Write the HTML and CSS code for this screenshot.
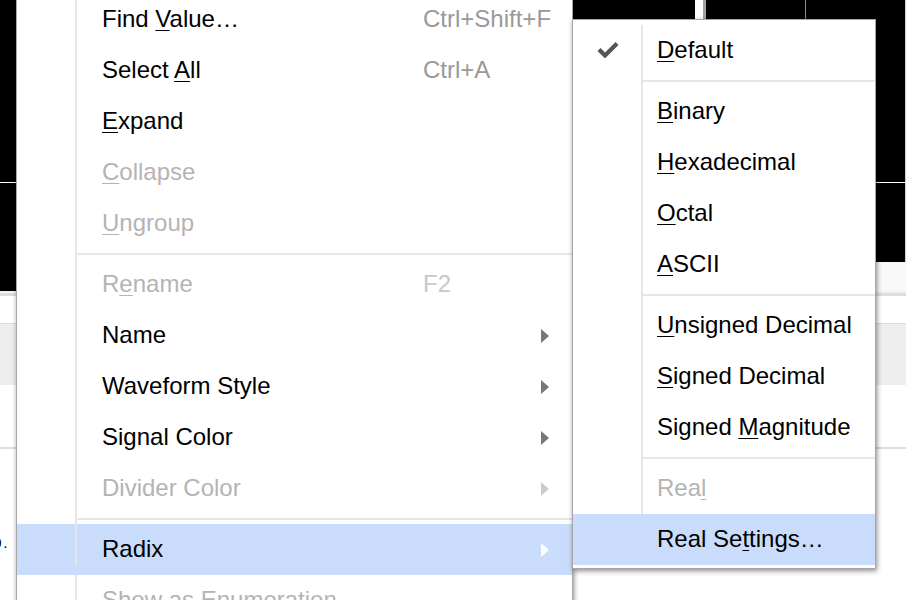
FILE: index.html
```html
<!DOCTYPE html>
<html>
<head>
<meta charset="utf-8">
<link rel="stylesheet" href="styles.css">
</head>
<body>
<div class="app">
  <div class="top">
    <div class="names-top"></div>
    <div class="waves-top">
      <div class="wave-canvas"></div>
      <div class="wave-strip"></div>
    </div>
  </div>
  <div class="band-edge"></div>
  <div class="band-white1"></div>
  <div class="rule"></div>
  <div class="band-gray"></div>
  <div class="band-white2"></div>
  <div class="rule2"></div>
  <div class="band-last"><span class="cell-text">0.</span></div>

  <div class="menu main">
    <div class="item"><div class="ic"></div><div class="lb">Find <u>V</u>alue…</div><div class="sc">Ctrl+Shift+F</div><div class="ar"></div></div>
    <div class="item"><div class="ic"></div><div class="lb">Select <u>A</u>ll</div><div class="sc">Ctrl+A</div><div class="ar"></div></div>
    <div class="item"><div class="ic"></div><div class="lb"><u>E</u>xpand</div><div class="sc"></div><div class="ar"></div></div>
    <div class="item dis"><div class="ic"></div><div class="lb"><u>C</u>ollapse</div><div class="sc"></div><div class="ar"></div></div>
    <div class="item dis"><div class="ic"></div><div class="lb"><u>U</u>ngroup</div><div class="sc"></div><div class="ar"></div></div>
    <div class="sep"><div class="ic"></div><div class="line"></div></div>
    <div class="item dis"><div class="ic"></div><div class="lb">R<u>e</u>name</div><div class="sc">F2</div><div class="ar"></div></div>
    <div class="item"><div class="ic"></div><div class="lb">Name</div><div class="sc"></div><div class="ar"><svg width="8" height="14" viewBox="0 0 8 14"><path d="M0 0L8 7L0 14Z"/></svg></div></div>
    <div class="item"><div class="ic"></div><div class="lb">Waveform Style</div><div class="sc"></div><div class="ar"><svg width="8" height="14" viewBox="0 0 8 14"><path d="M0 0L8 7L0 14Z"/></svg></div></div>
    <div class="item"><div class="ic"></div><div class="lb">Signal Color</div><div class="sc"></div><div class="ar"><svg width="8" height="14" viewBox="0 0 8 14"><path d="M0 0L8 7L0 14Z"/></svg></div></div>
    <div class="item dis"><div class="ic"></div><div class="lb">Divider Color</div><div class="sc"></div><div class="ar"><svg width="8" height="14" viewBox="0 0 8 14"><path d="M0 0L8 7L0 14Z"/></svg></div></div>
    <div class="sep"><div class="ic"></div><div class="line"></div></div>
    <div class="item hl"><div class="ic"></div><div class="lb">Radix</div><div class="sc"></div><div class="ar"><svg width="8" height="14" viewBox="0 0 8 14"><path d="M0 0L8 7L0 14Z"/></svg></div></div>
    <div class="item dis"><div class="ic"></div><div class="lb">Show as Enumeration</div><div class="sc"></div><div class="ar"></div></div>
  </div>

  <div class="menu sub">
    <div class="item"><div class="ic"><svg class="check" width="22" height="17" viewBox="0 0 22 17"><path d="M2 8.5L8 14.5L20 2.5" fill="none" stroke="#555" stroke-width="4.2"/></svg></div><div class="lb"><u>D</u>efault</div></div>
    <div class="sep"><div class="ic"></div><div class="line"></div></div>
    <div class="item"><div class="ic"></div><div class="lb"><u>B</u>inary</div></div>
    <div class="item"><div class="ic"></div><div class="lb"><u>H</u>exadecimal</div></div>
    <div class="item"><div class="ic"></div><div class="lb"><u>O</u>ctal</div></div>
    <div class="item"><div class="ic"></div><div class="lb"><u>A</u>SCII</div></div>
    <div class="sep"><div class="ic"></div><div class="line"></div></div>
    <div class="item"><div class="ic"></div><div class="lb"><u>U</u>nsigned Decimal</div></div>
    <div class="item"><div class="ic"></div><div class="lb"><u>S</u>igned Decimal</div></div>
    <div class="item"><div class="ic"></div><div class="lb">Signed <u>M</u>agnitude</div></div>
    <div class="sep"><div class="ic"></div><div class="line"></div></div>
    <div class="item dis"><div class="ic"></div><div class="lb">Rea<u>l</u></div></div>
    <div class="item hl"><div class="ic"></div><div class="lb">Real Se<u>t</u>tings…</div></div>
  </div>
</div>
</body>
</html>
```

FILE: styles.css
```css
html, body {
  margin: 0;
  padding: 0;
  background: #fff;
}
body {
  width: 906px;
  height: 600px;
  overflow: hidden;
  font-family: "Liberation Sans", Arial, sans-serif;
}
.app {
  position: relative;
  width: 906px;
  height: 600px;
  overflow: hidden;
}

/* background application */
.top {
  display: flex;
  height: 291px;
}
.names-top {
  width: 300px;
  background:
    linear-gradient(#fff, #fff) 0 182px / 100% 1px no-repeat,
    #000;
}
.waves-top {
  flex: 1;
  display: flex;
  flex-direction: column;
}
.wave-canvas {
  height: 262px;
  background:
    linear-gradient(#fff, #fff) 0 182px / 100% 1px no-repeat,
    linear-gradient(#fff, #fff) 395px 0 / 8px 100% no-repeat,
    linear-gradient(#a0a0a0, #a0a0a0) 403px 0 / 3px 100% no-repeat,
    linear-gradient(#8a8a8a, #8a8a8a) 505px 0 / 1px 100% no-repeat,
    linear-gradient(#cfcfcf, #cfcfcf) 605px 0 / 1px 100% no-repeat,
    #000;
}
.wave-strip {
  flex: 1;
  background: #f9f9f9;
}
.band-edge {
  height: 2px;
  background: #f2f2f2;
  border-bottom: 3px solid #dedede;
}
.band-white1 { height: 27px; }
.rule { height: 1px; background: #dadada; }
.band-gray { height: 61px; background: #eeeeee; }
.band-white2 { height: 62px; }
.rule2 { height: 2px; background: #dedede; }
.band-last {
  padding-top: 85px;
}
.cell-text {
  display: inline-block;
  margin-left: -6px;
  font-family: "Liberation Serif", "Times New Roman", serif;
  font-size: 15px;
  line-height: 16px;
  letter-spacing: 2px;
  color: #000;
}

/* menus */
.menu {
  position: absolute;
  box-sizing: border-box;
  background: #fff;
  border: 1px solid #a6a6a6;
  box-shadow: 1px 2px 5px rgba(0, 0, 0, 0.45);
  font-size: 24px;
  color: #000;
}
.main {
  left: 16px;
  top: -11px;
  width: 557px;
  padding: 4px 0;
}
.sub {
  left: 572px;
  top: 19px;
  width: 304px;
  padding: 5px 0 3px;
}
.item {
  display: grid;
  grid-template-rows: 51px;
  height: 51px;
  align-items: start;
  line-height: 49px;
  white-space: nowrap;
}
.main .item {
  grid-template-columns: 60px 346px 1fr 8px;
  padding-right: 23px;
}
.sub .item {
  grid-template-columns: 70px 1fr;
}
.ic {
  box-sizing: border-box;
  height: 51px;
  border-right: 2px solid #e6e6e6;
  display: flex;
  align-items: center;
  justify-content: center;
}
.main .lb { padding-left: 25px; }
.sub .lb { padding-left: 14px; }
.sc { color: #999; }
.ar {
  display: flex;
  align-items: center;
  height: 51px;
}
.ar svg { fill: #777; display: block; }
.dis { color: #b4b4b4; }
.dis .sc { color: #c8c8c8; }
.dis .ar svg { fill: #cccccc; }
.hl { background: #cadcfb; }
.hl .ic { border-right-color: transparent; }
.hl .ar svg { fill: #fff; }
.check { display: block; margin-left: 2px; margin-top: -2px; }

.sep {
  display: grid;
  height: 10px;
}
.main .sep { grid-template-columns: 60px 1fr; }
.sub .sep { grid-template-columns: 70px 1fr; }
.sep .line {
  height: 2px;
  margin-top: 4px;
  background: #e6e6e6;
}
u {
  text-decoration-thickness: 1px;
  text-underline-offset: 3px;
}
```
